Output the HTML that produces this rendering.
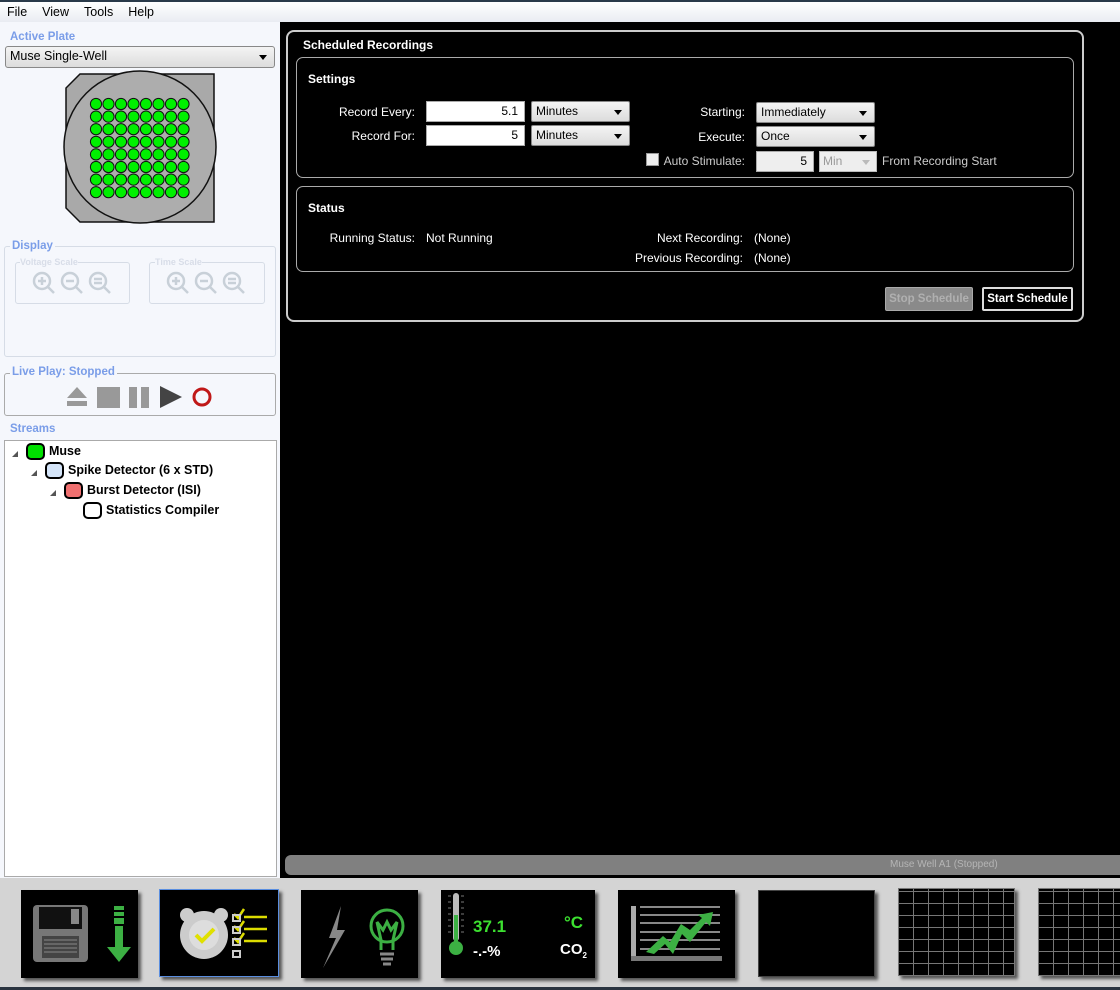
<!DOCTYPE html>
<html><head><meta charset="utf-8"><style>
*{margin:0;padding:0;box-sizing:border-box}
body{width:1120px;height:990px;overflow:hidden;background:#d4d4d4;font-family:"Liberation Sans",sans-serif;font-size:12px;position:relative}
.a{position:absolute}
.menu{left:0;top:0;width:1120px;height:22px;background:linear-gradient(#fff,#e9ecf2);border-top:2px solid #2a3a4a}
.menu span{margin-left:7px;margin-right:8px;line-height:20px;font-size:12.5px}
.left{left:0;top:22px;width:280px;height:856px;background:#f5f7fc}
.blue{color:#7a9de8;font-weight:bold;font-size:11.5px}
.grp{border:1px solid #d6dce6;border-radius:3px}
.main{left:280px;top:22px;width:840px;height:856px;background:#000}
.w{color:#fff}
.b{font-weight:bold}
.inp{background:#fff;border:1px solid #aaa;height:21px;text-align:right;padding-right:6px;line-height:19px;color:#000}
.dd{background:linear-gradient(#f4f4f4,#dcdcdc);border:1px solid #888;border-radius:2px;height:21px;line-height:19px;padding-left:4px;color:#000}
.dd:after{content:"";position:absolute;right:7px;top:8px;border:4px solid transparent;border-top:5px solid #000}
.r{text-align:right}
.tile{background:#000;box-shadow:3px 3px 3px #555}
.tri{position:absolute;width:0;height:0;border-left:6px solid transparent;border-bottom:6px solid #555}
</style></head><body>
<div class="a menu"><span>File</span><span>View</span><span>Tools</span><span>Help</span></div>
<div class="a left">
 <div class="a blue" style="left:10px;top:9px">Active Plate</div>
 <div class="a dd" style="left:5px;top:24px;width:270px;height:22px;border-radius:3px;font-size:12.5px;padding-left:4px">Muse Single-Well</div>
 <svg class="a" style="left:60px;top:26px" width="160" height="180">
  <polygon points="20,26 154,26 154,174 20,174 6,160 6,40" fill="#a9a9a9" stroke="#111" stroke-width="1.5"/>
  <circle cx="80" cy="99" r="76" fill="#adadad" stroke="#111" stroke-width="1.5"/>
  <g id="wells"></g>
 </svg>
 <div class="a grp" style="left:4px;top:224px;width:272px;height:111px"></div>
 <div class="a blue" style="left:10px;top:218px;background:#f5f7fc;padding:0 2px">Display</div>
 <div class="a grp" style="left:15px;top:240px;width:115px;height:42px"></div>
 <div class="a grp" style="left:149px;top:240px;width:116px;height:42px"></div>
 <div class="a" style="left:20px;top:235px;font-size:9px;color:#d8dde8;font-weight:bold;background:#f5f7fc">Voltage Scale</div>
 <div class="a" style="left:155px;top:235px;font-size:9px;color:#d8dde8;font-weight:bold;background:#f5f7fc">Time Scale</div>
 <svg class="a" style="left:30px;top:248px" width="90" height="26"><g fill="none" stroke="#c8d0d8" stroke-width="2.5"><circle cx="12" cy="11" r="8"/><line x1="18" y1="17" x2="24" y2="23"/><path d="M8 11h8M12 7v8"/><circle cx="40" cy="11" r="8"/><line x1="46" y1="17" x2="52" y2="23"/><path d="M36 11h8"/><circle cx="68" cy="11" r="8"/><line x1="74" y1="17" x2="80" y2="23"/><path d="M64 9h8M64 13h8"/></g></svg>
 <svg class="a" style="left:164px;top:248px" width="90" height="26"><g fill="none" stroke="#c8d0d8" stroke-width="2.5"><circle cx="12" cy="11" r="8"/><line x1="18" y1="17" x2="24" y2="23"/><path d="M8 11h8M12 7v8"/><circle cx="40" cy="11" r="8"/><line x1="46" y1="17" x2="52" y2="23"/><path d="M36 11h8"/><circle cx="68" cy="11" r="8"/><line x1="74" y1="17" x2="80" y2="23"/><path d="M64 9h8M64 13h8"/></g></svg>
 <div class="a" style="left:4px;top:351px;width:272px;height:43px;border:1px solid #aaa;border-radius:3px"></div>
 <div class="a blue" style="left:10px;top:344px;background:#f5f7fc;padding:0 2px">Live Play: Stopped</div>
 <svg class="a" style="left:64px;top:362px" width="160" height="26"><polygon points="3,14 13,3 23,14" fill="#999"/><rect x="3" y="17" width="20" height="5" fill="#999"/><rect x="33" y="3" width="23" height="21" fill="#999"/><rect x="65" y="3" width="8" height="21" fill="#999"/><rect x="77" y="3" width="8" height="21" fill="#999"/><polygon points="96,2 118,13 96,24" fill="#444"/><circle cx="138" cy="13" r="8" fill="none" stroke="#c01818" stroke-width="3"/></svg>
 <div class="a blue" style="left:10px;top:401px">Streams</div>
 <div class="a" style="left:4px;top:418px;width:273px;height:437px;background:#fff;border:1px solid #aaa;font-weight:bold;font-size:12.5px">
  <div class="tri" style="left:7px;top:10px"></div>
  <div class="a" style="left:21px;top:2px;width:19px;height:17px;border:2px solid #000;border-radius:5px;background:#00e000"></div>
  <div class="a" style="left:44px;top:3px">Muse</div>
  <div class="tri" style="left:26px;top:29px"></div>
  <div class="a" style="left:40px;top:21px;width:19px;height:17px;border:2px solid #000;border-radius:5px;background:#d4e4f8"></div>
  <div class="a" style="left:63px;top:22px">Spike Detector (6 x STD)</div>
  <div class="tri" style="left:45px;top:49px"></div>
  <div class="a" style="left:59px;top:41px;width:19px;height:17px;border:2px solid #000;border-radius:5px;background:#f07070"></div>
  <div class="a" style="left:82px;top:42px">Burst Detector (ISI)</div>
  <div class="a" style="left:78px;top:61px;width:19px;height:17px;border:2px solid #000;border-radius:5px;background:#fff"></div>
  <div class="a" style="left:101px;top:62px">Statistics Compiler</div>
 </div>
</div>
<div class="a main">
 <div class="a" style="left:6px;top:8px;width:798px;height:292px;border:2px solid #ccc;border-radius:8px"></div>
 <div class="a w b" style="left:23px;top:16px">Scheduled Recordings</div>
 <div class="a" style="left:16px;top:35px;width:778px;height:121px;border:1px solid #aaa;border-radius:7px"></div>
 <div class="a w b" style="left:28px;top:50px">Settings</div>
 <div class="a w r" style="left:0;width:135px;top:83px">Record Every:</div>
 <div class="a w r" style="left:0;width:135px;top:107px">Record For:</div>
 <div class="a inp" style="left:146px;top:79px;width:99px">5.1</div>
 <div class="a inp" style="left:146px;top:103px;width:99px">5</div>
 <div class="a dd" style="left:251px;top:79px;width:99px">Minutes</div>
 <div class="a dd" style="left:251px;top:103px;width:99px">Minutes</div>
 <div class="a w r" style="left:300px;width:165px;top:83px">Starting:</div>
 <div class="a w r" style="left:300px;width:165px;top:108px">Execute:</div>
 <div class="a r" style="left:300px;width:165px;top:132px;color:#ccc">Auto Stimulate:</div>
 <div class="a" style="left:366px;top:131px;width:13px;height:13px;background:#eee;border:1px solid #999"></div>
 <div class="a dd" style="left:476px;top:80px;width:119px">Immediately</div>
 <div class="a dd" style="left:476px;top:104px;width:119px">Once</div>
 <div class="a inp" style="left:476px;top:129px;width:58px;background:#eee">5</div>
 <div class="a" style="left:539px;top:129px;width:58px;height:21px;background:#eee;border:1px solid #bbb;color:#999;padding-left:3px;line-height:19px">Min<span class="a" style="right:6px;top:8px;border:4px solid transparent;border-top:5px solid #bbb"></span></div>
 <div class="a" style="left:602px;top:132px;color:#ccc">From Recording Start</div>
 <div class="a" style="left:16px;top:164px;width:778px;height:86px;border:1px solid #aaa;border-radius:7px"></div>
 <div class="a w b" style="left:28px;top:179px">Status</div>
 <div class="a w r" style="left:0;width:135px;top:209px">Running Status:</div>
 <div class="a w" style="left:146px;top:209px">Not Running</div>
 <div class="a w r" style="left:300px;width:163px;top:209px">Next Recording:</div>
 <div class="a w r" style="left:300px;width:163px;top:229px">Previous Recording:</div>
 <div class="a w" style="left:474px;top:209px">(None)</div>
 <div class="a w" style="left:474px;top:229px">(None)</div>
 <div class="a b" style="left:605px;top:265px;width:88px;height:24px;background:#8a8a8a;border:1px solid #aaa;border-radius:2px;color:#b0b0b0;text-align:center;line-height:22px;font-size:11.5px">Stop Schedule</div>
 <div class="a w b" style="left:702px;top:265px;width:91px;height:24px;border:2px solid #ddd;border-radius:2px;text-align:center;line-height:20px;font-size:11.5px">Start Schedule</div>
 <div class="a" style="left:5px;top:833px;width:840px;height:20px;background:#808080;border-radius:6px 0 0 6px;color:#b5b5b5;font-size:10px;line-height:20px;padding-left:605px">Muse Well A1 (Stopped)</div>
</div>
<div class="a" style="left:0;top:987px;width:1120px;height:3px;background:#2a3440"></div>
<div class="a tile" style="left:21px;top:890px;width:117px;height:88px">
 <svg width="117" height="88"><rect x="12" y="15" width="55" height="57" rx="4" fill="#777"/><rect x="18" y="17" width="43" height="22" fill="#111"/><rect x="50" y="19" width="8" height="15" fill="#888"/><rect x="21" y="46" width="37" height="22" fill="#444"/><g stroke="#888"><path d="M23 50h33M23 54h33M23 58h33M23 62h33"/></g><g fill="#3cb043"><rect x="93" y="16" width="10" height="4"/><rect x="93" y="22" width="10" height="4"/><rect x="93" y="28" width="10" height="6"/><rect x="94" y="36" width="8" height="22"/><polygon points="86,57 110,57 98,72"/></g></svg></div>
<div class="a tile" style="left:159px;top:889px;width:120px;height:88px;border:1px solid #5a8ee0">
 <svg width="118" height="86"><g fill="#ccc"><circle cx="44" cy="45" r="24"/><circle cx="27" cy="25" r="7"/><circle cx="61" cy="25" r="7"/></g><circle cx="44" cy="45" r="15" fill="#ddd"/><path d="M36 45l6 6 12-12" stroke="#e0e000" stroke-width="4" fill="none"/><g stroke="#dcdc00" stroke-width="2.5" fill="none"><path d="M84 27h23M84 39h23M84 51h23"/><path d="M74 24l4 4 6-9M74 36l4 4 6-9M74 48l4 4 6-9"/></g><g fill="none" stroke="#ccc" stroke-width="2"><rect x="73" y="25" width="7" height="6"/><rect x="73" y="37" width="7" height="6"/><rect x="73" y="49" width="7" height="6"/><rect x="73" y="61" width="7" height="6"/></g></svg></div>
<div class="a tile" style="left:301px;top:890px;width:117px;height:88px">
 <svg width="117" height="88"><polygon points="40,16 28,48 35,48 22,78 44,40 36,40" fill="#888"/><g fill="none" stroke="#3cb043" stroke-width="3"><circle cx="86" cy="36" r="16"/><path d="M80 60V50l-4-18 6 8 4-8 4 8 6-8-4 18v10"/></g><g stroke="#888" stroke-width="3"><path d="M79 64h14M80 69h12M82 74h8"/></g></svg></div>
<div class="a tile" style="left:441px;top:890px;width:154px;height:88px">
 <svg width="154" height="88"><rect x="12" y="3" width="6" height="48" rx="3" fill="#bbb"/><rect x="13" y="25" width="4" height="30" fill="#3cb043"/><circle cx="15" cy="58" r="7" fill="#3cb043"/><g stroke="#777"><path d="M7 6h3M7 12h3M7 18h3M7 24h3M7 30h3M7 36h3M7 42h3M20 6h3M20 12h3M20 18h3M20 24h3M20 30h3M20 36h3M20 42h3"/></g><text x="32" y="42" fill="#3ce030" font-family="Liberation Sans" font-weight="bold" font-size="17">37.1</text><text x="32" y="66" fill="#fff" font-family="Liberation Sans" font-weight="bold" font-size="15">-.-%</text></svg></div>
<div class="a" style="left:564px;top:913px;color:#3ce030;font-weight:bold;font-size:17px">°C</div>
<div class="a" style="left:560px;top:941px;color:#fff;font-weight:bold;font-size:15px">CO<sub style="font-size:8px">2</sub></div>
<div class="a tile" style="left:618px;top:890px;width:117px;height:88px">
 <svg width="117" height="88"><rect x="13" y="16" width="5" height="55" fill="#aaa"/><rect x="13" y="66" width="91" height="5" fill="#777"/><g stroke="#888" stroke-width="2"><path d="M22 17h80M22 25h80M22 33h80M22 42h80M22 50h80M22 59h80"/></g><polygon points="28,62 45,46 52,52 63,34 72,40 84,28 80,25 95,22 92,36 88,32 72,52 64,44 55,64 47,54 36,64" fill="#3cb043"/></svg></div>
<div class="a tile" style="left:758px;top:890px;width:117px;height:87px;border:1px solid #444"></div>
<div class="a tile" style="left:898px;top:888px;width:117px;height:88px;border:1px solid #777;background:repeating-linear-gradient(90deg,transparent 0 14px,#777 14px 15px),repeating-linear-gradient(0deg,transparent 0 11px,#777 11px 12px) #000"></div>
<div class="a tile" style="left:1038px;top:888px;width:90px;height:88px;border:1px solid #777;background:repeating-linear-gradient(90deg,transparent 0 14px,#777 14px 15px),repeating-linear-gradient(0deg,transparent 0 11px,#777 11px 12px) #000"></div>
<script>
var g=document.getElementById('wells'),s='';
for(var r=0;r<8;r++)for(var c=0;c<8;c++)s+='<circle cx="'+(36+c*12.5)+'" cy="'+(56+r*12.6)+'" r="5.6" fill="#00f000" stroke="#111"/>';
g.innerHTML=s;
</script>
</body></html>
